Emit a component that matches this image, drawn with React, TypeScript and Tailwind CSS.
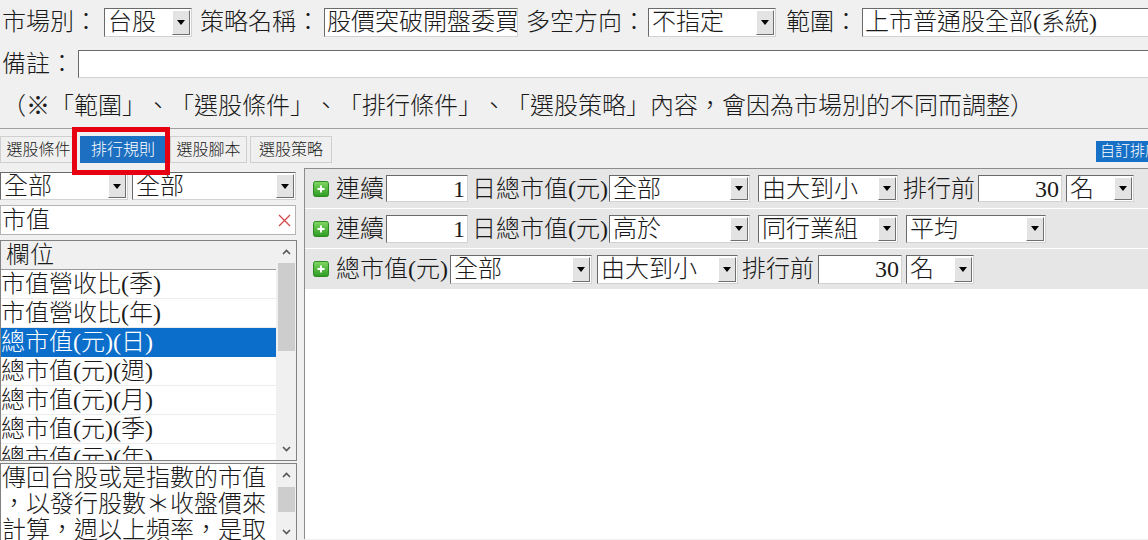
import React from 'react';

// Windows-classic style controls
function DropButton() {
  return (
    <div className="w-[18px] shrink-0 m-[1px] bg-[#e3e3e3] border border-t-white border-l-white border-r-[#6f6f6f] border-b-[#6f6f6f] flex items-center justify-center">
      <svg width="8" height="5" viewBox="0 0 8 5">
        <path d="M0 0h8L4 5z" fill="#000" />
      </svg>
    </div>
  );
}

function Select({ value, className }: { value: string; className: string }) {
  return (
    <div className={`flex items-stretch shrink-0 bg-white border border-[#6a6a6a] border-r-[#d2d2d2] border-b-[#d2d2d2] ${className}`}>
      <div className="flex-1 min-w-0 pl-[3px] flex items-center overflow-hidden whitespace-nowrap">{value}</div>
      <DropButton />
    </div>
  );
}

function Field({ value, className, right }: { value: string; className: string; right?: boolean }) {
  return (
    <div
      className={`flex items-center shrink-0 bg-white border border-[#6a6a6a] border-r-[#d2d2d2] border-b-[#d2d2d2] overflow-hidden whitespace-nowrap ${
        right ? 'justify-end pr-[2px]' : 'pl-[2px]'
      } ${className}`}
    >
      {value}
    </div>
  );
}

function Plus() {
  return (
    <svg width="16" height="16" viewBox="0 0 16 16" className="shrink-0">
      <defs>
        <linearGradient id="pg" x1="0" y1="0" x2="0" y2="1">
          <stop offset="0" stopColor="#7fd862" />
          <stop offset="1" stopColor="#2e9a22" />
        </linearGradient>
      </defs>
      <rect x="0.5" y="0.5" width="15" height="15" rx="2" fill="url(#pg)" stroke="#2d8a20" />
      <path d="M8 4.5v7M4.5 8h7" stroke="#fff" strokeWidth="2" />
    </svg>
  );
}

function Chevron({ up }: { up?: boolean }) {
  return (
    <svg width="9" height="6" viewBox="0 0 9 6">
      <path d={up ? 'M1 5L4.5 1.5L8 5' : 'M1 1L4.5 4.5L8 1'} fill="none" stroke="#555" strokeWidth="1.6" />
    </svg>
  );
}

function ScrollBar({ thumbTop, thumbH }: { thumbTop: string; thumbH: string }) {
  return (
    <div className="w-[20px] shrink-0 bg-[#f0f0f0] flex flex-col items-center">
      <div className="h-[22px] flex items-center justify-center shrink-0">
        <Chevron up />
      </div>
      <div className="flex-1 w-full flex flex-col items-center">
        <div className={`w-[17px] bg-[#cdcdcd] ${thumbTop} ${thumbH}`} />
      </div>
      <div className="h-[22px] flex items-center justify-center shrink-0">
        <Chevron />
      </div>
    </div>
  );
}

const fields = ['市值營收比(季)', '市值營收比(年)', '總市值(元)(日)', '總市值(元)(週)', '總市值(元)(月)', '總市值(元)(季)', '總市值(元)(年)'];

export default function App() {
  return (
    <div className="relative w-[1148px] h-[540px] overflow-hidden bg-[#f0f0f0] text-[#1a1a1a] text-[24px] leading-none font-light [text-spacing-trim:space-all] font-['Liberation_Serif','Noto_Sans_CJK_TC',serif]">
      {/* top form */}
      <div className="h-[44px] flex items-center overflow-hidden whitespace-nowrap">
        <span className="ml-[2px] w-[102px] shrink-0">市場別：</span>
        <Select value="台股" className="w-[88px] h-[29px]" />
        <span className="ml-[8px] w-[124px] shrink-0">策略名稱：</span>
        <Field value="股價突破開盤委買" className="w-[194px] h-[29px]" />
        <span className="ml-[8px] w-[122px] shrink-0">多空方向：</span>
        <Select value="不指定" className="w-[128px] h-[29px]" />
        <span className="ml-[10px] w-[76px] shrink-0">範圍：</span>
        <Field value="上市普通股全部(系統)" className="w-[320px] h-[29px]" />
      </div>
      <div className="h-[40px] flex items-center overflow-hidden">
        <span className="ml-[2px] w-[76px] shrink-0">備註：</span>
        <Field value="" className="flex-1 h-[28px] border-r-0" />
      </div>
      <div className="h-[45px] flex items-center pl-[2px] border-b border-[#a0a0a0] whitespace-nowrap">
        （※「範圍」、「選股條件」、「排行條件」、「選股策略」內容，會因為市場別的不同而調整）
      </div>

      {/* tabs */}
      <div className="h-[39px] flex items-start pt-[7px] text-[16px] whitespace-nowrap">
        <div className="w-[77px] h-[27px] flex items-center justify-center border border-[#cfcfcf]">選股條件</div>
        <div className="ml-[3px] w-[86px] h-[27px] flex items-center justify-center bg-[#1c6fc1] text-white">排行規則</div>
        <div className="ml-[4px] w-[77px] h-[27px] flex items-center justify-center border border-[#cfcfcf]">選股腳本</div>
        <div className="ml-[3px] w-[82px] h-[27px] flex items-center justify-center border border-[#cfcfcf]">選股策略</div>
        <div className="ml-auto mt-[5px] w-[52px] h-[21px] bg-[#1670c6] text-white text-[15px] pl-[4px] flex items-center overflow-hidden">
          自訂排序
        </div>
      </div>

      {/* main */}
      <div className="flex h-[371px]">
        <div className="w-[298px] shrink-0 flex flex-col pt-[4px]">
          <div className="flex h-[28px] shrink-0">
            <Select value="全部" className="w-[128px] h-full" />
            <Select value="全部" className="ml-[4px] w-[164px] h-full" />
          </div>
          <div className="mt-[5px] h-[30px] w-[296px] bg-white border border-[#b4b4b4] flex items-center pl-[1px] shrink-0">
            <span className="flex-1">市值</span>
            <svg width="13" height="13" viewBox="0 0 13 13" className="mr-[4px]">
              <path d="M1 1L12 12M12 1L1 12" stroke="#d24a4a" strokeWidth="1.3" />
            </svg>
          </div>
          <div className="mt-[5px] h-[221px] w-[297px] border border-[#828282] bg-white flex shrink-0">
            <div className="flex-1 min-w-0 overflow-hidden">
              <div className="h-[29px] bg-[#f0f0f0] border-b border-[#9a9a9a] pl-[5px] flex items-center">欄位</div>
              {fields.map((f, i) => (
                <div
                  key={f}
                  className={`h-[29px] flex items-center whitespace-nowrap border-b ${
                    i === 2 ? 'bg-[#0c6ecb] text-white border-[#0c6ecb]' : 'border-[#ececec]'
                  }`}
                >
                  {f}
                </div>
              ))}
            </div>
            <ScrollBar thumbTop="mt-0" thumbH="h-[88px]" />
          </div>
          <div className="mt-[2px] flex-1 w-[297px] border border-[#828282] bg-white flex">
            <div className="flex-1 min-w-0 overflow-hidden whitespace-nowrap leading-[26px] pl-[1px] pt-[1px]">
              <div>傳回台股或是指數的市值</div>
              <div>，以發行股數＊收盤價來</div>
              <div>計算，週以上頻率，是取</div>
            </div>
            <ScrollBar thumbTop="mt-[1px]" thumbH="h-[25px]" />
          </div>
        </div>

        <div className="ml-[6px] flex-1 border-l border-t border-[#8c8c8c] bg-white flex flex-col whitespace-nowrap">
          <div className="h-[40px] border-b border-white bg-[#e6e6e6] flex items-center pl-[8px]">
            <Plus />
            <span className="ml-[7px]">連續</span>
            <Field right value="1" className="ml-[2px] w-[82px] h-[27px]" />
            <span className="ml-[4px]">日總市值(元)</span>
            <Select value="全部" className="ml-[1px] w-[141px] h-[27px]" />
            <Select value="由大到小" className="ml-[8px] w-[140px] h-[27px]" />
            <span className="ml-[5px]">排行前</span>
            <Field right value="30" className="ml-[3px] w-[84px] h-[27px]" />
            <Select value="名" className="ml-[4px] w-[68px] h-[27px]" />
          </div>
          <div className="h-[40px] border-b border-white bg-[#e6e6e6] flex items-center pl-[8px]">
            <Plus />
            <span className="ml-[7px]">連續</span>
            <Field right value="1" className="ml-[2px] w-[82px] h-[28px]" />
            <span className="ml-[4px]">日總市值(元)</span>
            <Select value="高於" className="ml-[1px] w-[141px] h-[28px]" />
            <Select value="同行業組" className="ml-[8px] w-[140px] h-[28px]" />
            <Select value="平均" className="ml-[8px] w-[140px] h-[28px]" />
          </div>
          <div className="h-[40px] bg-[#e6e6e6] flex items-center pl-[8px]">
            <Plus />
            <span className="ml-[7px]">總市值(元)</span>
            <Select value="全部" className="ml-[2px] w-[142px] h-[29px]" />
            <Select value="由大到小" className="ml-[5px] w-[141px] h-[29px]" />
            <span className="ml-[4px]">排行前</span>
            <Field right value="30" className="ml-[4px] w-[84px] h-[29px]" />
            <Select value="名" className="ml-[4px] w-[68px] h-[29px]" />
          </div>
        </div>
      </div>

      {/* red highlight annotation */}
      <div className="absolute left-[72px] top-[127px] w-[98px] h-[48px] border-[5px] border-[#e60012]" />
    </div>
  );
}
